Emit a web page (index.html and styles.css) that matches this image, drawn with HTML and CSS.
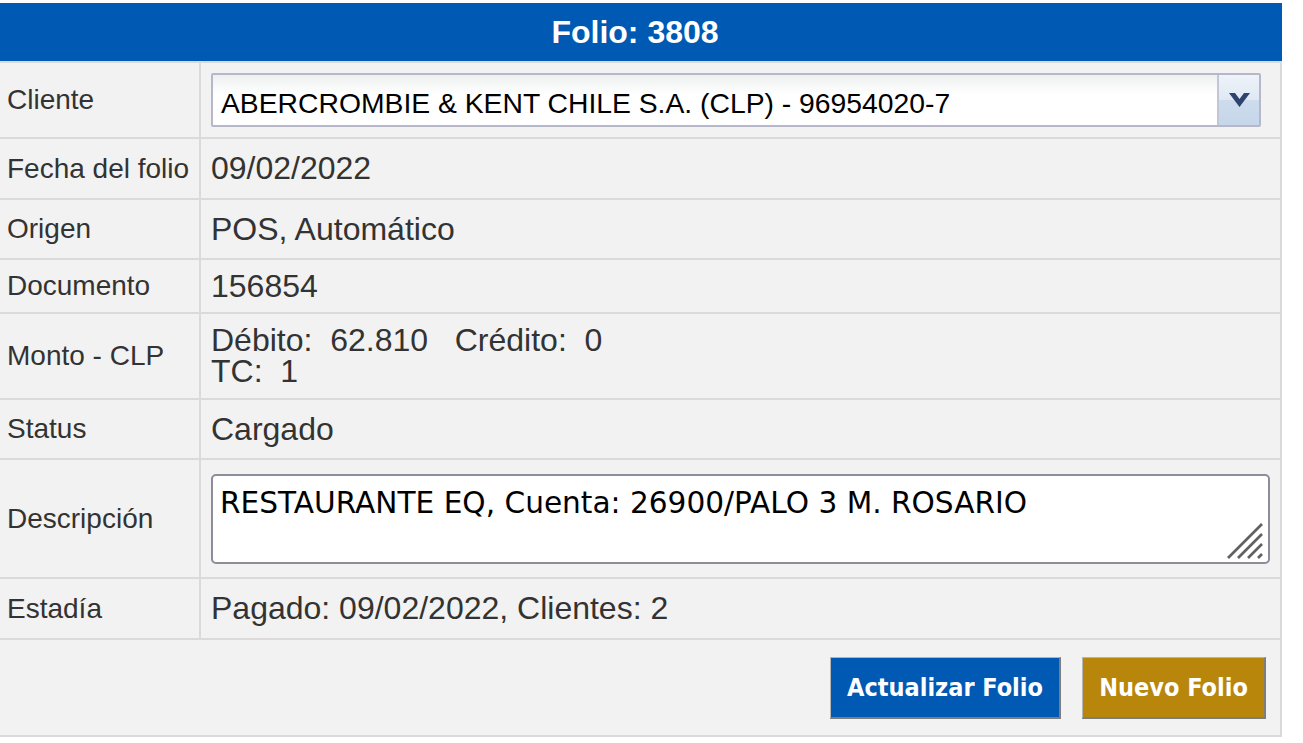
FILE: index.html
```html
<!DOCTYPE html>
<html lang="es">
<head>
    <meta charset="UTF-8">
    <meta name="viewport" content="width=device-width, initial-scale=1.0">
    <title>Folio 3808</title>
    <link rel="stylesheet" href="styles.css">
</head>
<body>

<div class="folio">
    <div class="folio-title">Folio: 3808</div>

    <div class="row row-cliente">
        <div class="label">Cliente</div>
        <div class="value">
            <div class="combo">
                <span class="combo-text">ABERCROMBIE &amp; KENT CHILE S.A. (CLP) - 96954020-7</span>
                <span class="combo-arrow">
                    <svg width="21" height="14" viewBox="0 0 21 14"><polygon points="0,0 6,0 10.5,6 15,0 21,0 10.5,14" fill="#2d4470"/></svg>
                </span>
            </div>
        </div>
    </div>

    <div class="row row-normal">
        <div class="label">Fecha del folio</div>
        <div class="value">09/02/2022</div>
    </div>

    <div class="row row-origen">
        <div class="label">Origen</div>
        <div class="value">POS, Automático</div>
    </div>

    <div class="row row-short">
        <div class="label">Documento</div>
        <div class="value">156854</div>
    </div>

    <div class="row row-monto">
        <div class="label">Monto - CLP</div>
        <div class="value value-lines">
            <div>Débito:&nbsp;&nbsp;62.810&nbsp;&nbsp;&nbsp;Crédito:&nbsp;&nbsp;0</div>
            <div>TC:&nbsp;&nbsp;1</div>
        </div>
    </div>

    <div class="row row-origen">
        <div class="label">Status</div>
        <div class="value">Cargado</div>
    </div>

    <div class="row row-desc">
        <div class="label">Descripción</div>
        <div class="value">
            <div class="desc-box">
                <textarea id="descripcion">RESTAURANTE EQ, Cuenta: 26900/PALO 3 M. ROSARIO</textarea>
                <svg class="grip" width="36" height="36" viewBox="0 0 36 36">
                    <g stroke="#616161" stroke-width="2.6">
                        <line x1="35" y1="1" x2="1" y2="35"/>
                        <line x1="35" y1="11" x2="11" y2="35"/>
                        <line x1="35" y1="21" x2="21" y2="35"/>
                        <line x1="35" y1="31" x2="31" y2="35"/>
                    </g>
                </svg>
            </div>
        </div>
    </div>

    <div class="row row-normal">
        <div class="label">Estadía</div>
        <div class="value">Pagado: 09/02/2022, Clientes: 2</div>
    </div>

    <div class="actions">
        <button class="btn btn-blue" id="actualizar">Actualizar Folio</button>
        <button class="btn btn-gold" id="nuevo">Nuevo Folio</button>
    </div>
</div>

</body>
</html>
```

FILE: styles.css
```css
body {
    margin: 0;
    background: #fff;
    font-family: "Liberation Sans", Arial, sans-serif;
    color: #333;
}
.folio {
    width: 1282px;
    box-sizing: border-box;
    margin-top: 3px;
    background: #f2f2f2;
    border-right: 2px solid #dadada;
}
.folio-title {
    height: 58px;
    margin-right: -2px;
    padding-right: 12px;
    background: #0059b3;
    border-bottom: 2px solid #dadada;
    color: #fff;
    font-size: 32px;
    font-weight: bold;
    display: flex;
    align-items: center;
    justify-content: center;
}
.row {
    display: grid;
    grid-template-columns: 201px 1fr;
    box-sizing: border-box;
    border-bottom: 2px solid #dadada;
}
.row-cliente { height: 76px; }
.row-normal { height: 61px; }
.row-origen { height: 60px; }
.row-short { height: 54px; }
.row-monto { height: 86px; }
.row-desc { height: 119px; }
.label {
    display: flex;
    align-items: center;
    padding-left: 7px;
    border-right: 2px solid #dadada;
    font-size: 28px;
}
.value {
    display: flex;
    align-items: center;
    padding-left: 10px;
    font-size: 32px;
}
.value-lines {
    flex-direction: column;
    align-items: flex-start;
    justify-content: center;
    line-height: 31px;
}
.combo {
    display: flex;
    width: 1050px;
    height: 54px;
    box-sizing: border-box;
    border: 2px solid #b6b8ca;
    border-radius: 2px;
    background: linear-gradient(#eef0f0, #fff 40%);
}
.combo-text {
    flex: 1;
    display: flex;
    align-items: center;
    padding: 6px 0 0 8px;
    font-size: 28.3px;
    color: #000;
}
.combo-arrow {
    width: 40px;
    display: flex;
    align-items: center;
    justify-content: center;
    border-left: 2px solid #c3c6d6;
    background: linear-gradient(#eef3f9, #dfe8f4 50%, #cddbed 51%, #c6d7eb);
}
.desc-box {
    position: relative;
    width: 1059px;
    height: 90px;
}
.desc-box textarea {
    width: 100%;
    height: 100%;
    box-sizing: border-box;
    margin: 0;
    padding: 10px 7px;
    border: 2px solid #8e8c99;
    border-radius: 5px;
    background: #fff;
    resize: none;
    font-family: "DejaVu Sans", Verdana, sans-serif;
    font-size: 29.6px;
    color: #000;
}
.grip {
    position: absolute;
    right: 7px;
    bottom: 5px;
}
.actions {
    height: 97px;
    box-sizing: border-box;
    border-bottom: 2px solid #dadada;
    display: flex;
    align-items: center;
    justify-content: flex-end;
    gap: 21px;
    padding-right: 14px;
}
.btn {
    height: 62px;
    box-sizing: border-box;
    border-style: solid;
    border-width: 1px 2px 2px 1px;
    border-color: #b5b5b5 #7d7d7d #7d7d7d #b5b5b5;
    color: #fff;
    font-family: "DejaVu Sans Condensed", "DejaVu Sans", Tahoma, sans-serif;
    font-stretch: condensed;
    font-weight: bold;
    font-size: 25px;
    padding: 0;
    cursor: pointer;
}
.btn-blue {
    width: 231px;
    background: #0059b3;
}
.btn-gold {
    width: 184px;
    background: #b8860b;
}
```
